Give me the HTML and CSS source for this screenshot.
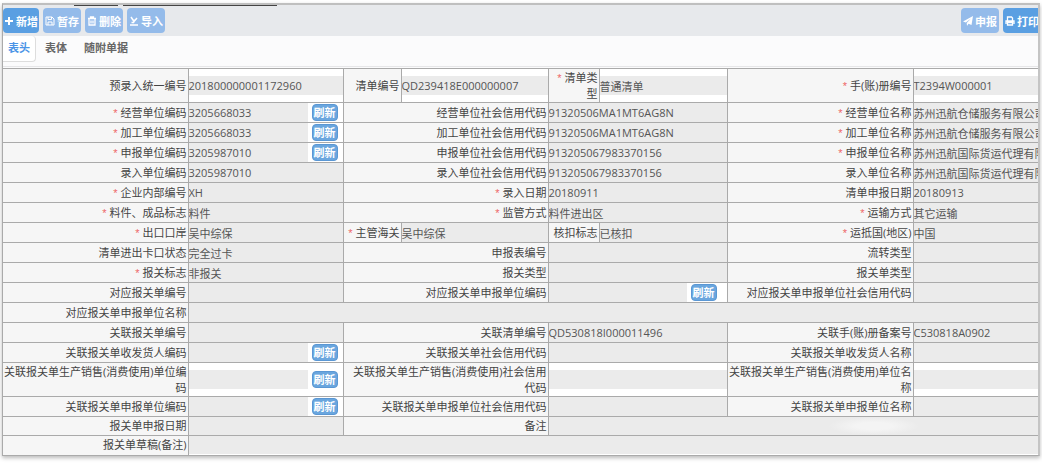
FILE: index.html
```html
<!DOCTYPE html>
<html lang="zh-CN">
<head>
    <title>核注清单 - 表头</title>
    <meta charset="UTF-8">
    <link rel="stylesheet" href="styles.css">
</head>
<body>
<div class="panel">
    <div class="toolbar">
        <button type="button" class="btn">
            <svg viewBox="0 0 10 10"><path d="M5 1v8M1 5h8" stroke-width="2"/></svg>新增
        </button>
        <button type="button" class="btn" disabled>
            <svg viewBox="0 0 10 10"><path d="M1 1h6l2 2v6H1zM3 1v2.500h3.500V1M3 9V6h4v3"/></svg>暂存
        </button>
        <button type="button" class="btn" disabled>
            <svg viewBox="0 0 10 10"><path d="M1 2.500h8M3.500 2V1h3v1M2 3v6h6V3M4 4.500v3M6 4.500v3" stroke-width="1.300"/></svg>删除
        </button>
        <button type="button" class="btn" disabled>
            <svg viewBox="0 0 10 10"><path d="M1 9h8M2 1l3 4.500L8 2M5 6.500H2.500M5 6.500V3.500" stroke-width="1.500"/></svg>导入
        </button>
        <span class="space"></span>
        <button type="button" class="btn" disabled>
            <svg viewBox="0 0 10 10"><path class="fill" d="M10 0L8.500 9 5.500 7.800 4 10 3.700 7 8 2.500 2.800 6.600 0 5.500z"/></svg>申报
        </button>
        <button type="button" class="btn print">
            <svg viewBox="0 0 10 10"><path d="M2.500 5V1h4l1 1v3M1 8V5h8v3M2.500 6.500h5V9h-5z" stroke-width="1.300"/></svg>打印
        </button>
    </div>

    <div class="tabs">
        <a href="#head" class="active">表头</a>
        <a href="#body">表体</a>
        <a href="#docs">随附单据</a>
    </div>

    <table class="form" id="head">
        <colgroup>
            <col class="c1"><col class="c2"><col class="c3"><col class="c4">
            <col class="c5"><col class="c6"><col class="c7"><col class="c8">
        </colgroup>
        <tr class="tall">
            <th><label for="seqNo">预录入统一编号</label></th>
            <td><input id="seqNo" value="201800000001172960" readonly></td>
            <th><label for="invtNo">清单编号</label></th>
            <td><input id="invtNo" value="QD239418E000000007" readonly></td>
            <th><label for="invtType" class="req">清单类型</label></th>
            <td><input id="invtType" value="普通清单" readonly></td>
            <th><label for="bookNo" class="req">手(账)册编号</label></th>
            <td><input id="bookNo" value="T2394W000001" readonly></td>
        </tr>
        <tr>
            <th><label for="tradeCode" class="req">经营单位编码</label></th>
            <td><div class="with-btn"><input id="tradeCode" value="3205668033" readonly><button type="button" class="refresh">刷新</button></div></td>
            <th colspan="2"><label for="tradeScc">经营单位社会信用代码</label></th>
            <td colspan="2"><input id="tradeScc" value="91320506MA1MT6AG8N" readonly></td>
            <th><label for="tradeName" class="req">经营单位名称</label></th>
            <td><input id="tradeName" value="苏州迅航仓储服务有限公司" readonly></td>
        </tr>
        <tr>
            <th><label for="ownerCode" class="req">加工单位编码</label></th>
            <td><div class="with-btn"><input id="ownerCode" value="3205668033" readonly><button type="button" class="refresh">刷新</button></div></td>
            <th colspan="2"><label for="ownerScc">加工单位社会信用代码</label></th>
            <td colspan="2"><input id="ownerScc" value="91320506MA1MT6AG8N" readonly></td>
            <th><label for="ownerName" class="req">加工单位名称</label></th>
            <td><input id="ownerName" value="苏州迅航仓储服务有限公司" readonly></td>
        </tr>
        <tr>
            <th><label for="declCode" class="req">申报单位编码</label></th>
            <td><div class="with-btn"><input id="declCode" value="3205987010" readonly><button type="button" class="refresh">刷新</button></div></td>
            <th colspan="2"><label for="declScc">申报单位社会信用代码</label></th>
            <td colspan="2"><input id="declScc" value="913205067983370156" readonly></td>
            <th><label for="declName" class="req">申报单位名称</label></th>
            <td><input id="declName" value="苏州迅航国际货运代理有限公司" readonly></td>
        </tr>
        <tr>
            <th><label for="inputCode">录入单位编码</label></th>
            <td><input id="inputCode" value="3205987010" readonly></td>
            <th colspan="2"><label for="inputScc">录入单位社会信用代码</label></th>
            <td colspan="2"><input id="inputScc" value="913205067983370156" readonly></td>
            <th><label for="inputName">录入单位名称</label></th>
            <td><input id="inputName" value="苏州迅航国际货运代理有限公司" readonly></td>
        </tr>
        <tr>
            <th><label for="innerNo" class="req">企业内部编号</label></th>
            <td><input id="innerNo" value="XH" readonly></td>
            <th colspan="2"><label for="inputDate" class="req">录入日期</label></th>
            <td colspan="2"><input id="inputDate" value="20180911" readonly></td>
            <th><label for="declDate">清单申报日期</label></th>
            <td><input id="declDate" value="20180913" readonly></td>
        </tr>
        <tr>
            <th><label for="mtpck" class="req">料件、成品标志</label></th>
            <td><input id="mtpck" value="料件" readonly></td>
            <th colspan="2"><label for="supvMode" class="req">监管方式</label></th>
            <td colspan="2"><input id="supvMode" value="料件进出区" readonly></td>
            <th><label for="trafMode" class="req">运输方式</label></th>
            <td><input id="trafMode" value="其它运输" readonly></td>
        </tr>
        <tr>
            <th><label for="iePort" class="req">出口口岸</label></th>
            <td><input id="iePort" value="吴中综保" readonly></td>
            <th><label for="customs" class="req">主管海关</label></th>
            <td><input id="customs" value="吴中综保" readonly></td>
            <th><label for="vrfd">核扣标志</label></th>
            <td><input id="vrfd" value="已核扣" readonly></td>
            <th><label for="country" class="req">运抵国(地区)</label></th>
            <td><input id="country" value="中国" readonly></td>
        </tr>
        <tr>
            <th><label for="gateState">清单进出卡口状态</label></th>
            <td><input id="gateState" value="完全过卡" readonly></td>
            <th colspan="2"><label for="applyNo">申报表编号</label></th>
            <td colspan="2"><input id="applyNo" readonly></td>
            <th><label for="flowType">流转类型</label></th>
            <td><input id="flowType" readonly></td>
        </tr>
        <tr>
            <th><label for="dclFlag" class="req">报关标志</label></th>
            <td><input id="dclFlag" value="非报关" readonly></td>
            <th colspan="2"><label for="dclType">报关类型</label></th>
            <td colspan="2"><input id="dclType" readonly></td>
            <th><label for="entryType">报关单类型</label></th>
            <td><input id="entryType" readonly></td>
        </tr>
        <tr>
            <th><label for="entryNo">对应报关单编号</label></th>
            <td><input id="entryNo" readonly></td>
            <th colspan="2"><label for="entryDeclCode">对应报关单申报单位编码</label></th>
            <td colspan="2"><div class="with-btn wide"><input id="entryDeclCode" readonly><button type="button" class="refresh">刷新</button></div></td>
            <th><label for="entryDeclScc">对应报关单申报单位社会信用代码</label></th>
            <td><input id="entryDeclScc" readonly></td>
        </tr>
        <tr>
            <th><label for="entryDeclName">对应报关单申报单位名称</label></th>
            <td colspan="7"><input id="entryDeclName" readonly></td>
        </tr>
        <tr>
            <th><label for="rltEntryNo">关联报关单编号</label></th>
            <td><input id="rltEntryNo" readonly></td>
            <th colspan="2"><label for="rltInvtNo">关联清单编号</label></th>
            <td colspan="2"><input id="rltInvtNo" value="QD530818I000011496" readonly></td>
            <th><label for="rltBookNo">关联手(账)册备案号</label></th>
            <td><input id="rltBookNo" value="C530818A0902" readonly></td>
        </tr>
        <tr>
            <th><label for="rltTradeCode">关联报关单收发货人编码</label></th>
            <td><div class="with-btn"><input id="rltTradeCode" readonly><button type="button" class="refresh">刷新</button></div></td>
            <th colspan="2"><label for="rltTradeScc">关联报关单社会信用代码</label></th>
            <td colspan="2"><input id="rltTradeScc" readonly></td>
            <th><label for="rltTradeName">关联报关单收发货人名称</label></th>
            <td><input id="rltTradeName" readonly></td>
        </tr>
        <tr class="tall">
            <th><label for="rltOwnerCode">关联报关单生产销售(消费使用)单位编码</label></th>
            <td><div class="with-btn"><input id="rltOwnerCode" readonly><button type="button" class="refresh">刷新</button></div></td>
            <th colspan="2"><label for="rltOwnerScc">关联报关单生产销售(消费使用)社会信用代码</label></th>
            <td colspan="2"><input id="rltOwnerScc" readonly></td>
            <th><label for="rltOwnerName">关联报关单生产销售(消费使用)单位名称</label></th>
            <td><input id="rltOwnerName" readonly></td>
        </tr>
        <tr>
            <th><label for="rltDeclCode">关联报关单申报单位编码</label></th>
            <td><div class="with-btn"><input id="rltDeclCode" readonly><button type="button" class="refresh">刷新</button></div></td>
            <th colspan="2"><label for="rltDeclScc">关联报关单申报单位社会信用代码</label></th>
            <td colspan="2"><input id="rltDeclScc" readonly></td>
            <th><label for="rltDeclName">关联报关单申报单位名称</label></th>
            <td><input id="rltDeclName" readonly></td>
        </tr>
        <tr class="short">
            <th><label for="entryDate">报关单申报日期</label></th>
            <td><input id="entryDate" readonly></td>
            <th colspan="2"><label for="note">备注</label></th>
            <td colspan="4"><input id="note" class="note" readonly></td>
        </tr>
        <tr class="short">
            <th><label for="draftNote">报关单草稿(备注)</label></th>
            <td colspan="7"><input id="draftNote" readonly></td>
        </tr>
    </table>
</div>
</body>
</html>
```
FILE: styles.css
```css
* {
  box-sizing: border-box;
}

body {
  margin: 0;
  padding: 3px 2px 8px;
  background-color: #fff;
  color: #444;
  font-family: "Open Sans", "Noto Sans CJK SC", sans-serif;
  font-size: 11px;
  line-height: 16px;
}

.panel {
  overflow: hidden;
  border: 1px solid #aaa;
  border-top: 2px solid #bfbfbf;
  border-right: 2px solid #c4c4c4;
  background-color: #fbfbfc;
  box-shadow: 0 2px 4px #bbb;
}

/* Toolbar */
.toolbar {
  display: flex;
  gap: 4px;
  height: 31px;
  padding-top: 3px;
  background-color: #e7e9ec;
  background-image: linear-gradient(#444, #444), linear-gradient(#444, #444);
  background-position: 71px 0, 120px 0;
  background-size: 44px 1px, 154px 1px;
  background-repeat: no-repeat;
}

.btn {
  display: flex;
  align-items: center;
  flex: none;
  gap: 2px;
  height: 25px;
  padding: 0 1px;
  border: 0;
  border-radius: 4px;
  background-color: #5a9fe2;
  color: #fff;
  font: bold 11px "Open Sans", "Noto Sans CJK SC", sans-serif;
  white-space: nowrap;
}

.btn:disabled {
  padding: 0 2px;
  background-color: #94bbea;
}

.btn svg {
  width: 10px;
  height: 10px;
  fill: none;
  stroke: #fff;
}

.btn svg .fill {
  fill: #fff;
  stroke: none;
}

.space {
  flex: 1;
}

/* runs off the right edge of the panel */
.print {
  padding: 0 2px;
  margin-right: -3px;
}

/* Tabs */
.tabs {
  display: flex;
  height: 31px;
  margin-bottom: 1px;
  border-bottom: 1px solid #e6e6e8;
}

.tabs a {
  height: 26px;
  padding: 4px 8px;
  color: #666;
  font-weight: 600;
  text-decoration: none;
}

.tabs a + a {
  margin-left: 1px;
}

.tabs .active {
  padding: 4px 5px;
  border-right: 1px solid #ddd;
  border-bottom: 1px solid #ddd;
  border-radius: 0 4px 4px 0;
  background-color: #fff;
  color: #4a94e6;
}

/* Form table */
.form {
  width: 100%;
  table-layout: fixed;
  border-collapse: collapse;
  border-style: hidden;
  border-top: 1px solid #aaa;
}

.c1 { width: 185px; }
.c2 { width: 155px; }
.c3 { width: 58px; }
.c4 { width: 147px; }
.c5 { width: 51px; }
.c6 { width: 128px; }
.c7 { width: 186px; }
.c8 { width: 125px; }

.form th,
.form td {
  height: 20px;
  padding: 0;
  border: 1px solid #aaa;
}

.form th {
  padding-right: 1px;
  background-color: #f6f6f6;
  font-weight: normal;
  line-height: 16px;
  text-align: right;
}

.form td {
  background-color: #fff;
}

.form .tall th,
.form .tall td {
  height: 34px;
}

.form .short th,
.form .short td {
  height: 19px;
}

.form label {
  display: block;
}

.req::before {
  content: "* ";
  color: #e66;
  font-family: "Liberation Sans", sans-serif;
}

.form input {
  display: block;
  width: 100%;
  height: 19px;
  padding: 0;
  border: 0;
  outline: 0;
  background-color: #ebebeb;
  color: #555;
  font: inherit;
}

.form .short input {
  height: 18px;
}

.with-btn {
  display: flex;
  align-items: center;
}

.form .with-btn input {
  flex: 1;
  min-width: 0;
}

.refresh {
  flex: none;
  width: 26px;
  height: 17px;
  margin: 0 5px 0 4px;
  padding: 0;
  border: 1px solid #5a97d4;
  border-radius: 4px;
  background-color: #6aa6de;
  color: #fff;
  font: bold 11px/15px "Open Sans", "Noto Sans CJK SC", sans-serif;
}

.wide .refresh {
  margin-right: 10px;
}

.form .note {
  background-image: radial-gradient(closest-side, #f4f4f4 40%, #ebebeb);
  background-position: 280px 0;
  background-size: 90px 18px;
  background-repeat: no-repeat;
}
```
